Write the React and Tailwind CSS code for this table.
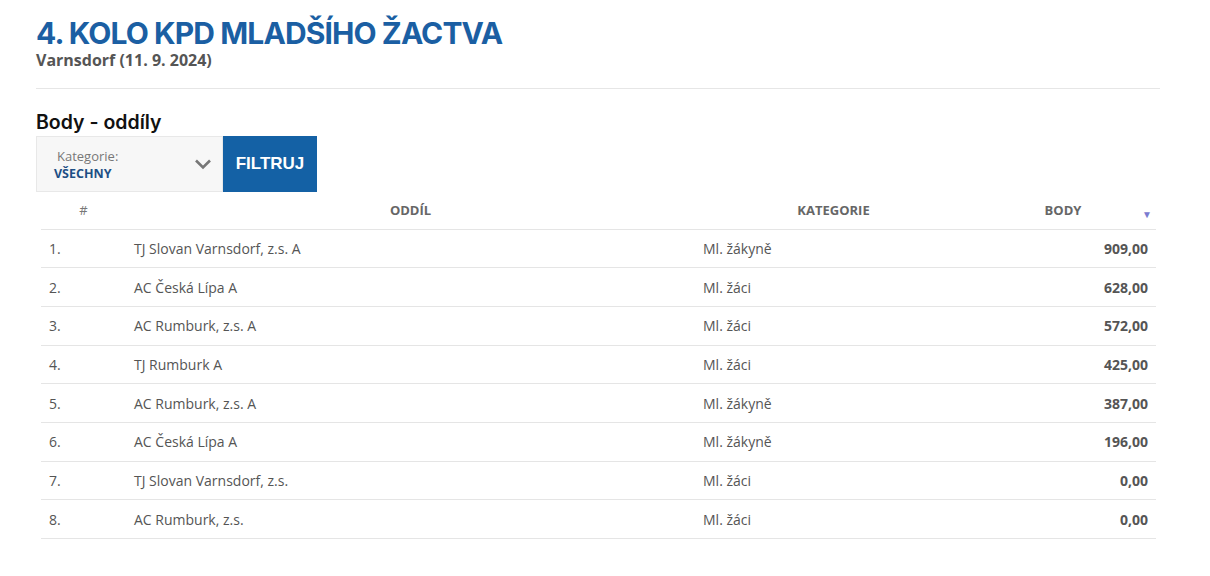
import React from "react";

const rows = [
  ["1.", "TJ Slovan Varnsdorf, z.s. A", "Ml. žákyně", "909,00"],
  ["2.", "AC Česká Lípa A", "Ml. žáci", "628,00"],
  ["3.", "AC Rumburk, z.s. A", "Ml. žáci", "572,00"],
  ["4.", "TJ Rumburk A", "Ml. žáci", "425,00"],
  ["5.", "AC Rumburk, z.s. A", "Ml. žákyně", "387,00"],
  ["6.", "AC Česká Lípa A", "Ml. žákyně", "196,00"],
  ["7.", "TJ Slovan Varnsdorf, z.s.", "Ml. žáci", "0,00"],
  ["8.", "AC Rumburk, z.s.", "Ml. žáci", "0,00"],
];

const App = () => {
  return (
    <div className="w-[1210px] h-[576px] bg-white font-['Open_Sans',sans-serif] text-[#555]">
      <div className="pl-[36px] pr-[50px] pt-[15px]">
        {/* header */}
        <h1 className="font-['Inter',sans-serif] font-bold text-[30px] leading-[36px] tracking-[-0.9px] text-[#1b5fa3]">
          4. KOLO KPD MLADŠÍHO ŽACTVA
        </h1>
        <p className="text-[16px] font-bold leading-[18px] text-[#555]">Varnsdorf (11. 9. 2024)</p>
        <hr className="mt-[19px] border-t border-[#e6e6e6]" />

        {/* filtr */}
        <h2 className="mt-[19px] font-['Inter',sans-serif] font-semibold text-[19.5px] leading-[28px] text-[#111]">
          Body - oddíly
        </h2>
        <form className="flex">
          <div className="w-[187px] h-[56px] bg-[#f7f7f7] border border-[#e8e8e8] flex items-center justify-between pl-[17px] pr-[10px]">
            <div className="flex flex-col pt-[1px]">
              <span className="text-[13px] leading-[18px] text-[#777] pl-[3px]">Kategorie:</span>
              <span className="text-[12.5px] leading-[18px] font-bold text-[#1d4f85]">VŠECHNY</span>
            </div>
            <svg width="18" height="12" viewBox="0 0 18 12" className="mb-[1px]">
              <path d="M2 2.5 L9 9.5 L16 2.5" fill="none" stroke="#777" strokeWidth="2.6" />
            </svg>
          </div>
          <button
            type="submit"
            className="w-[94px] h-[56px] bg-[#1461a5] text-white font-['Liberation_Sans',sans-serif] font-bold text-[17px]"
          >
            FILTRUJ
          </button>
        </form>

        {/* tabulka */}
        <table className="ml-[5px] w-[1115px] border-collapse text-[14px]">
          <thead>
            <tr className="h-[37px] border-b border-[#e5e5e5] text-[13px] font-bold text-[#666]">
              <th className="w-[85px] text-center font-normal text-[#777]">#</th>
              <th className="w-[569px] text-center">ODDÍL</th>
              <th className="w-[277px] text-center">KATEGORIE</th>
              <th className="relative text-center pr-[2px]">
                BODY
                <span className="absolute right-[4px] top-[17px] text-[10px] leading-none text-[#7b7bd0]">▼</span>
              </th>
            </tr>
          </thead>
          <tbody>
            {rows.map((r) => (
              <tr key={r[0]} className="h-[38.7px] border-b border-[#e5e5e5]">
                <td className="pl-[8px]">{r[0]}</td>
                <td className="pl-[8px]">{r[1]}</td>
                <td className="pl-[8px]">{r[2]}</td>
                <td className="pr-[8px] text-right font-bold">{r[3]}</td>
              </tr>
            ))}
          </tbody>
        </table>
      </div>
    </div>
  );
};

export default App;
